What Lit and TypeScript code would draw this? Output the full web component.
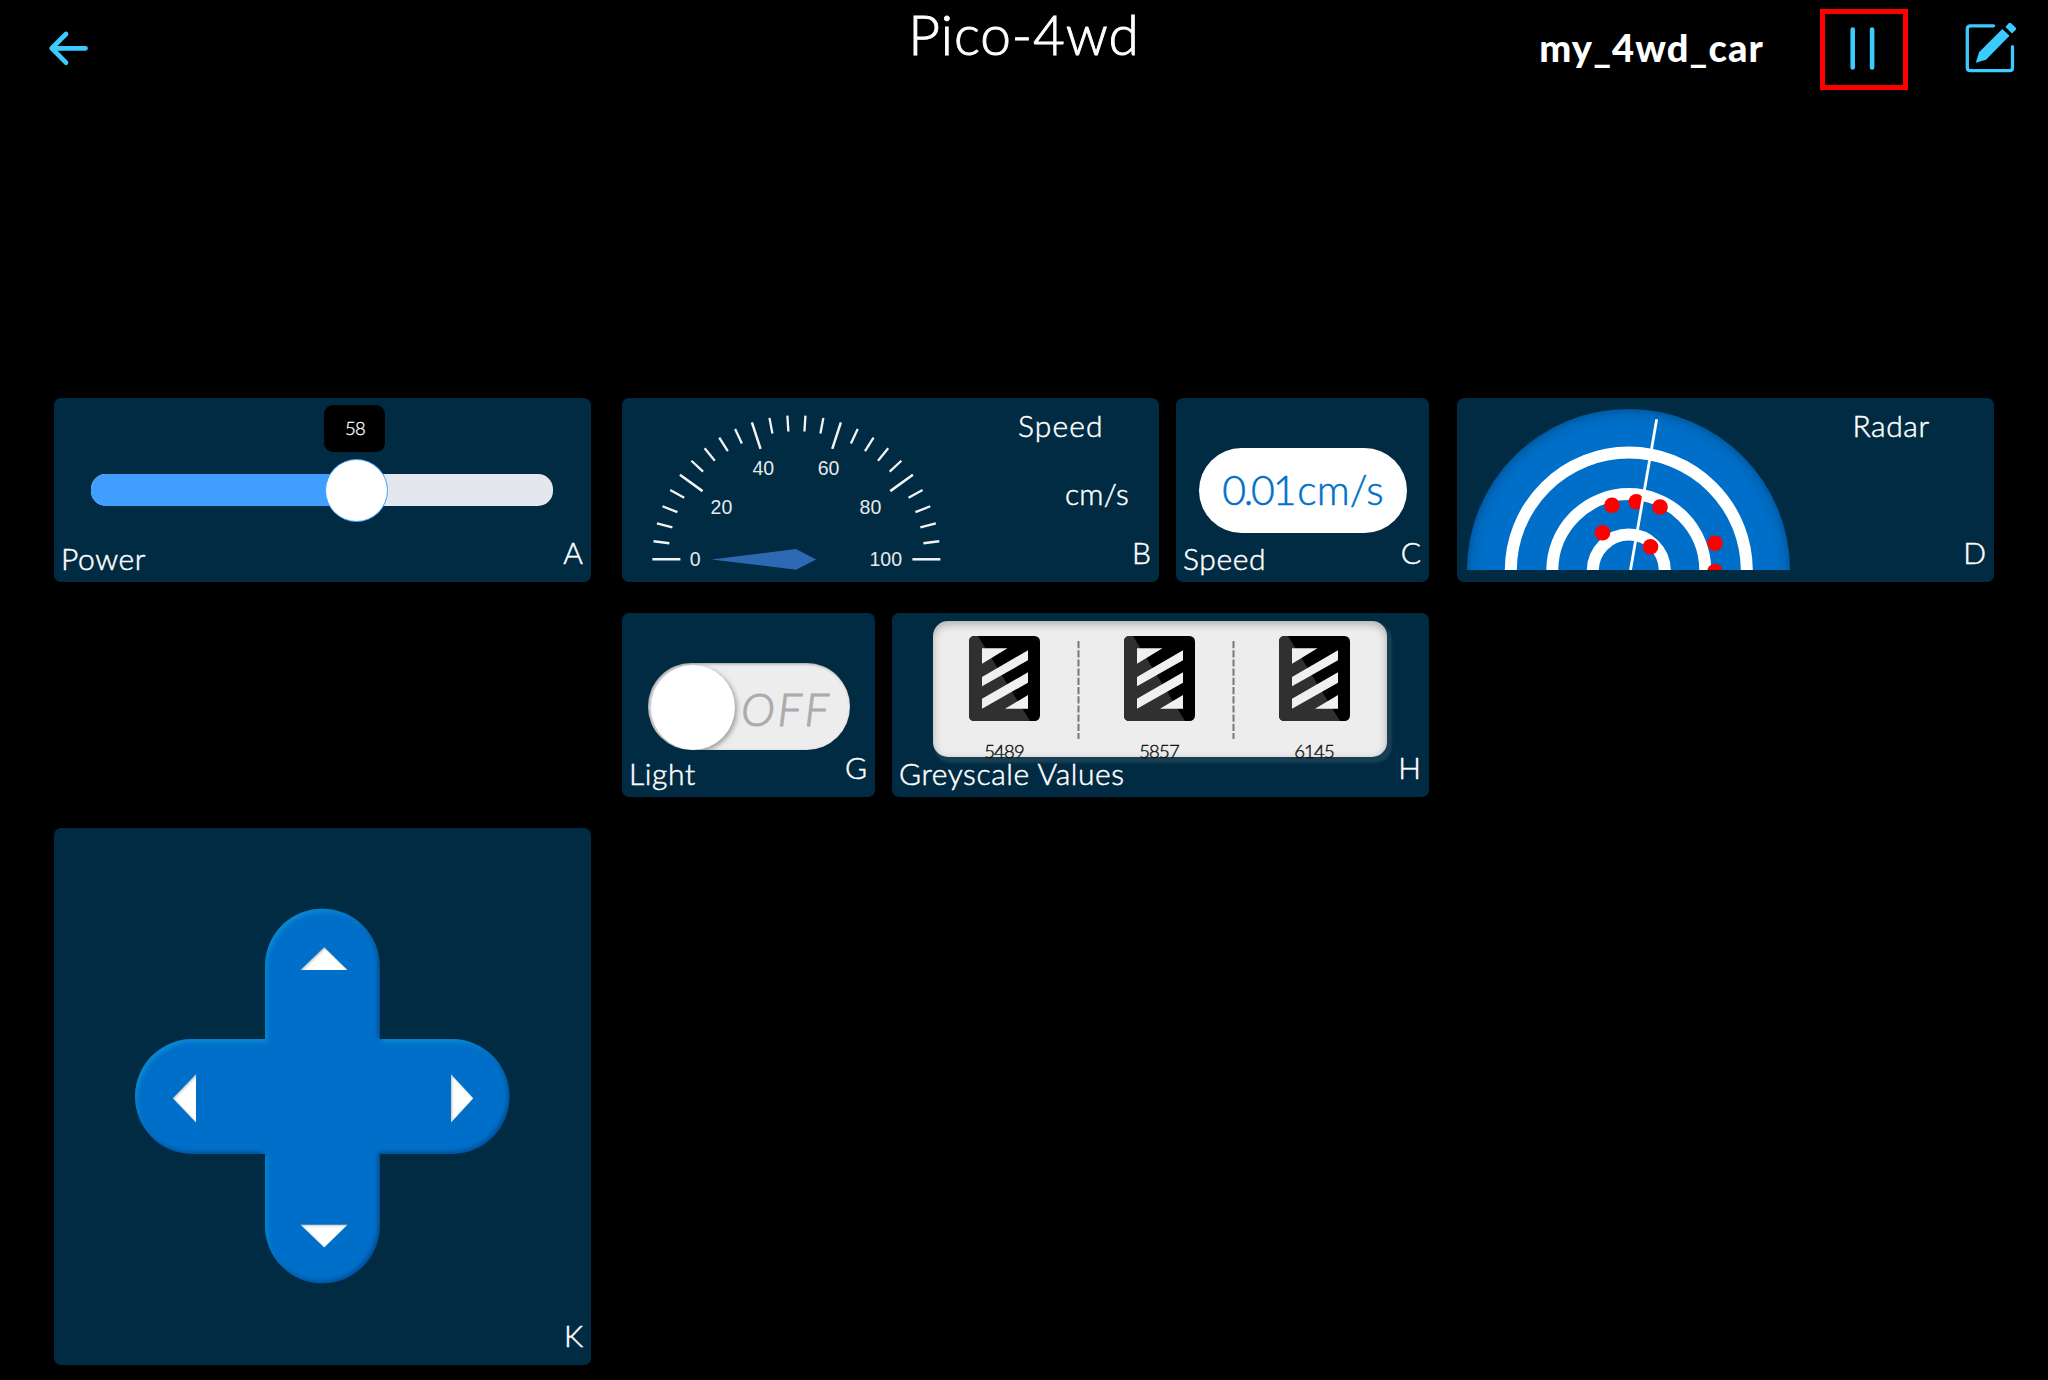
import { LitElement, html, svg, css } from "lit";
import { customElement, property } from "lit/decorators.js";

const polar = (cx: number, cy: number, r: number, deg: number) => {
  const a = (deg * Math.PI) / 180;
  return [cx - r * Math.cos(a), cy - r * Math.sin(a)];
};

/** A tile of the dashboard: a widget with a caption and a region letter. */
@customElement("widget-card")
class WidgetCard extends LitElement {
  @property() caption = "";
  @property() region = "";
  static styles = css`
    :host {
      display: grid;
      grid-template: 100% / 100%;
      box-sizing: border-box;
      height: 184px;
      background: #002b42;
      border-radius: 7px;
      overflow: hidden;
      color: #fff;
    }
    .body, .foot { grid-area: 1 / 1; min-width: 0; }
    .body { display: grid; }
    .foot {
      display: flex;
      justify-content: space-between;
      align-items: flex-end;
      padding: 0 8px 9px 7px;
      font-size: 30px;
      line-height: 30px;
      z-index: 1;
    }
    .caption { letter-spacing: 0.6px; white-space: nowrap; }
    .region { padding-bottom: 6px; }
  `;
  render() {
    return html`
      <div class="body"><slot></slot></div>
      <div class="foot">
        <span class="caption">${this.caption}</span>
        <span class="region">${this.region}</span>
      </div>
    `;
  }
}

@customElement("power-slider")
class PowerSlider extends LitElement {
  @property({ type: Number }) value = 0;
  static styles = css`
    :host { display: block; padding: 76px 38px 0 37px; }
    .track { position: relative; height: 32px; border-radius: 15px; background: #e4e7ed; }
    .fill { height: 100%; border-radius: 15px 0 0 15px; background: #409eff; }
    .knob {
      position: absolute; top: -15px; box-sizing: border-box; width: 63px; height: 63px;
      margin-left: -34px; border-radius: 50%; border: 1px solid #409eff; background: #fff;
    }
    .tip {
      position: absolute; top: -69px; width: 61px; height: 47px; margin-left: -34.5px;
      border-radius: 9px; background: #000; text-align: center;
      font-size: 18.5px; line-height: 46px; letter-spacing: -0.9px; -webkit-text-stroke-width: 0.3px;
    }
  `;
  render() {
    const pos = `${this.value}%`;
    return html`
      <div class="track">
        <div class="fill" style="width:${pos}"></div>
        <div class="knob" style="left:${pos}"></div>
        <div class="tip" style="left:${pos}">${this.value}</div>
      </div>
    `;
  }
}

@customElement("speed-gauge")
class SpeedGauge extends LitElement {
  static styles = css`
    :host { display: flex; justify-content: space-between; }
    svg { display: block; flex: none; }
    .num { font: 19.5px "Liberation Sans", sans-serif; fill: #e6eaed; text-anchor: middle; -webkit-text-stroke-width: 0; }
    .side { display: flex; flex-direction: column; font-size: 30px; line-height: 30px; padding-top: 12px; width: 141px; }
    .name { letter-spacing: 1.1px; }
    .unit { padding: 38px 0 0 47px; letter-spacing: 0.2px; }
  `;
  render() {
    const cx = 174.4;
    const cy = 161.3;
    const ticks = Array.from({ length: 26 }, (_, i) => {
      const major = i % 5 === 0;
      const [x1, y1] = polar(cx, cy, 144, i * 7.2);
      const [x2, y2] = polar(cx, cy, major ? 116 : 128, i * 7.2);
      return svg`<line x1=${x1} y1=${y1} x2=${x2} y2=${y2} stroke="#f2f4f5" stroke-width=${major ? 2.5 : 2.3} />`;
    });
    const nums: [string, number, number][] = [
      ["0", 73.3, 161.3], ["20", 99.4, 109.3], ["40", 141.3, 70.3],
      ["60", 206.5, 70.3], ["80", 248.4, 109.3], ["100", 263.8, 161.3],
    ];
    return html`
      <svg width="340" height="184" viewBox="0 0 340 184">
        ${ticks}
        ${nums.map(([t, x, y]) => svg`<text class="num" x=${x} y=${y + 7}>${t}</text>`)}
        <path d="M89.2 161.5L174 151l20.2 10.5L174 171.7z" fill="#2d69b3" />
      </svg>
      <div class="side">
        <span class="name">Speed</span>
        <span class="unit">cm/s</span>
      </div>
    `;
  }
}

@customElement("number-readout")
class NumberReadout extends LitElement {
  @property() value = "";
  @property() unit = "";
  static styles = css`
    :host { display: block; padding: 50px 22px 0 23px; }
    .pill {
      display: flex; justify-content: center; height: 85px; border-radius: 43px; background: #fff; color: #0070c9;
      font-size: 41px; line-height: 83px; white-space: nowrap;
    }
    .value { letter-spacing: -2.2px; margin-right: 3px; }
    .unit { letter-spacing: 0.1px; }
  `;
  render() {
    return html`<div class="pill"><span class="value">${this.value}</span><span class="unit">${this.unit}</span></div>`;
  }
}

@customElement("radar-view")
class RadarView extends LitElement {
  static styles = css`
    :host { display: flex; justify-content: space-between; }
    svg { display: block; flex: none; }
    .side { width: 141.5px; padding-top: 12px; font-size: 30px; line-height: 30px; }
    .name { letter-spacing: 0.6px; }
  `;
  render() {
    const dots = [
      [155, 107.3], [179.3, 103.7], [203, 109], [145.5, 134.7], [193.5, 148.7], [258, 145.3], [258, 173.6],
    ];
    return html`
      <svg width="345" height="184" viewBox="0 0 345 184">
        <defs>
          <clipPath id="half"><rect x="0" y="0" width="345" height="172" /></clipPath>
          <radialGradient id="dish" gradientUnits="userSpaceOnUse" cx="171.5" cy="173" r="162">
            <stop offset="0.9" stop-color="#006fc9" />
            <stop offset="0.96" stop-color="#0069be" />
            <stop offset="1" stop-color="#005aa3" />
          </radialGradient>
        </defs>
        <g clip-path="url(#half)">
          <circle cx="171.5" cy="172.6" r="161.6" fill="url(#dish)" />
          ${[118, 76.5, 36].map((r) => svg`<circle cx="171.8" cy="172.6" r=${r} fill="none" stroke="#fff" stroke-width="12" />`)}
          ${dots.map(([x, y]) => svg`<circle cx=${x} cy=${y} r="7.8" fill="#f00" />`)}
          <path d="M173.5 172L199.7 21.3" stroke="#fff" stroke-width="2.8" />
        </g>
      </svg>
      <div class="side"><span class="name">Radar</span></div>
    `;
  }
}

@customElement("light-switch")
class LightSwitch extends LitElement {
  static styles = css`
    :host { display: block; padding: 50px 25px 0 26px; }
    .pill {
      display: flex; align-items: center; box-sizing: border-box; height: 87px; padding: 1px 0 0 3px;
      border-radius: 44px; background: #ededed; box-shadow: inset 1px 1px 3px rgba(0, 0, 0, 0.35); overflow: hidden;
    }
    .knob { flex: none; width: 84px; height: 85px; border-radius: 50%; background: #fff; box-shadow: 2px 2px 5px rgba(0, 0, 0, 0.35); }
    .state {
      padding-left: 6px; color: #ababab; font-size: 46px; font-style: italic; line-height: 86px;
      letter-spacing: 2.6px; padding-top: 4px; -webkit-text-stroke-width: 1px;
    }
  `;
  render() {
    return html`<div class="pill"><div class="knob"></div><span class="state">OFF</span></div>`;
  }
}

@customElement("greyscale-sensors")
class GreyscaleSensors extends LitElement {
  @property({ type: Array }) values: number[] = [];
  static styles = css`
    :host { display: block; padding: 8px 42px 0 41px; }
    .panel {
      display: flex; justify-content: center; box-sizing: border-box; height: 136px; padding: 15px 2px 0 0;
      border-radius: 15px; background: #ededed; color: #111;
      box-shadow: inset 0 3px 9px rgba(0, 0, 0, 0.28), 3px 4px 2px 2px rgba(255, 255, 255, 0.09);
    }
    .cell { width: 71px; display: flex; flex-direction: column; align-items: center; }
    .icon, .line { display: block; flex: none; }
    .line { margin: 5px 44px 0 37px; }
    .value { padding-top: 20px; font-size: 18.5px; line-height: 20px; letter-spacing: -0.8px; -webkit-text-stroke-width: 0.4px; }
  `;
  render() {
    return html`<div class="panel">
      ${this.values.map((v, i) => html`
        ${i ? html`<svg class="line" width="3" height="99" viewBox="0 0 3 99">
          <path d="M1.5 0V98" stroke="#777" stroke-width="2" stroke-dasharray="7.2 2" />
        </svg>` : ""}
        <div class="cell">
          <svg class="icon" width="71" height="85" viewBox="0 0 71 85">
            <rect width="71" height="85" rx="5.5" fill="#000" />
            <path d="M5.5 0H9L61 85H5.5Q0 85 0 79.5V5.5Q0 0 5.5 0z" fill="#303030" />
            <path d="M13 12.3H38.5L13 27.7zM59 14.3v10L13 50.3V41zM59 36.3v10.4L13 72.7v-10zM59 59v13.7H36z" fill="#f0f0f0" />
          </svg>
          <span class="value">${v}</span>
        </div>
      `)}
    </div>`;
  }
}

@customElement("direction-pad")
class DirectionPad extends LitElement {
  static styles = css`
    :host { display: block; }
    svg { display: block; }
  `;
  render() {
    return html`
      <svg width="537" height="537" viewBox="0 0 537 537">
        <defs>
          <filter id="bevel" x="0" y="0" width="537" height="537" filterUnits="userSpaceOnUse" color-interpolation-filters="sRGB">
            <feGaussianBlur in="SourceAlpha" stdDeviation="2.2" result="b" />
            <feOffset in="b" dx="1.5" dy="2.5" result="o1" />
            <feComposite in="SourceAlpha" in2="o1" operator="out" result="hi" />
            <feFlood flood-color="#10a0dc" flood-opacity="0.6" />
            <feComposite in2="hi" operator="in" result="light" />
            <feOffset in="b" dx="-1.8" dy="-2.5" result="o2" />
            <feComposite in="SourceAlpha" in2="o2" operator="out" result="lo" />
            <feFlood flood-color="#003a78" flood-opacity="0.65" />
            <feComposite in2="lo" operator="in" result="dark" />
            <feMerge>
              <feMergeNode in="SourceGraphic" />
              <feMergeNode in="light" />
              <feMergeNode in="dark" />
            </feMerge>
          </filter>
          <filter id="dent" x="-20%" y="-20%" width="140%" height="140%" color-interpolation-filters="sRGB">
            <feGaussianBlur in="SourceAlpha" stdDeviation="1.3" />
            <feOffset dx="0.8" dy="1" result="o" />
            <feComposite in="SourceAlpha" in2="o" operator="out" result="s" />
            <feFlood flood-color="#000" flood-opacity="0.25" />
            <feComposite in2="s" operator="in" result="shade" />
            <feMerge><feMergeNode in="SourceGraphic" /><feMergeNode in="shade" /></feMerge>
          </filter>
        </defs>
        <path filter="url(#bevel)" fill="#006fc9" d="M211 138a57.3 57.3 0 0 1 114.600 0V211H398a57.300 57.300 0 0 1 0 115H325.600V398a57.300 57.300 0 0 1-114.600 0V326H138.500a57.300 57.300 0 0 1 0-115H211z" />
        <g filter="url(#dent)" fill="#fff">
          <path d="M270.2 119.3L293.5 142H246.5z" />
          <path d="M270.2 419.5L293.5 396.7H246.5z" />
          <path d="M118.8 270.2L142 246.3V294.5z" />
          <path d="M419.3 270.2L397 246.3V294.5z" />
        </g>
      </svg>
    `;
  }
}

@customElement("app-root")
class AppRoot extends LitElement {
  static styles = css`
    :host {
      display: flex; flex-direction: column; box-sizing: border-box; width: 2048px; height: 1380px;
      overflow: hidden; background: #000; color: #fff;
      font-family: Lato, "Open Sans", sans-serif; font-weight: 300; -webkit-text-stroke-width: 0.5px;
    }
    svg { display: block; }
    .bar {
      display: grid; grid-template-columns: 1fr auto 1fr; height: 98px; box-sizing: border-box;
      margin-bottom: 300px;
    }
    .back { padding: 29px 0 0 46px; }
    .title { font-size: 55px; line-height: 66px; padding-top: 1px; letter-spacing: 0.9px; -webkit-text-stroke-width: 0.9px; }
    .tools { display: flex; justify-content: flex-end; align-items: flex-start; padding-right: 29px; }
    .project { font-size: 38px; line-height: 46px; font-weight: 900; padding-top: 24px; margin-right: 56px; letter-spacing: 1.1px; -webkit-text-stroke-width: 0; }
    .pause { display: flex; justify-content: center; box-sizing: border-box; width: 88px; height: 81px; margin-top: 9px; padding-top: 13px; border: 5px solid #f00; }
    .edit { padding: 20px 0 0 54px; }
    .board { display: flex; padding-left: 54px; align-items: flex-start; }
    .col { display: flex; flex-direction: column; flex: none; width: 537px; gap: 31px; }
    .mid { width: 807px; margin: 0 28px 0 31px; }
    .row { display: flex; gap: 17px; }
    .wide { width: 537px; }
    .narrow { width: 253px; }
    .pad { height: 537px; margin-top: 215px; }
  `;
  render() {
    return html`
      <header class="bar">
        <div class="back">
          <svg width="46" height="40" viewBox="0 0 46 40" fill="none" stroke="#3bcbff" stroke-width="4.800" stroke-linecap="round" stroke-linejoin="round">
            <path d="M39.5 19.3H6M20 5L5.8 19.3L20 33.6" />
          </svg>
        </div>
        <div class="title">Pico-4wd</div>
        <div class="tools">
          <div class="project">my_4wd_car</div>
          <div class="pause">
            <svg width="30" height="44" viewBox="0 0 30 44" stroke="#3bcbff" stroke-width="4.600" stroke-linecap="round">
              <path d="M3.7 2.6V40.5M23.1 2.6V40.5" />
            </svg>
          </div>
          <div class="edit">
            <svg width="57" height="56" viewBox="0 0 57 56">
              <path d="M31.5 5.8H8.5Q5.3 5.8 5.3 9V47.5Q5.3 50.7 8.5 50.7H47.3Q50.5 50.7 50.5 47.5V26.7" fill="none" stroke="#3bcbff" stroke-width="3.300" stroke-linecap="round" />
              <path d="M40.3 9L47.5 15.8L24 39.7L13.8 42.8L17 32.3zM43.4 6.9L46.7 3.2Q47.8 2.2 49 3.2L53.6 7.6Q54.7 8.8 53.6 10L50 13.4z" fill="#3bcbff" />
            </svg>
          </div>
        </div>
      </header>
      <main class="board">
        <div class="col">
          <widget-card caption="Power" region="A"><power-slider value="58"></power-slider></widget-card>
          <widget-card class="pad" region="K"><direction-pad></direction-pad></widget-card>
        </div>
        <div class="col mid">
          <div class="row">
            <widget-card class="wide" region="B"><speed-gauge></speed-gauge></widget-card>
            <widget-card class="narrow" caption="Speed" region="C"><number-readout value="0.01" unit="cm/s"></number-readout></widget-card>
          </div>
          <div class="row">
            <widget-card class="narrow" caption="Light" region="G"><light-switch></light-switch></widget-card>
            <widget-card class="wide" caption="Greyscale Values" region="H"><greyscale-sensors .values=${[5489, 5857, 6145]}></greyscale-sensors></widget-card>
          </div>
        </div>
        <div class="col">
          <widget-card region="D"><radar-view></radar-view></widget-card>
        </div>
      </main>
    `;
  }
}
